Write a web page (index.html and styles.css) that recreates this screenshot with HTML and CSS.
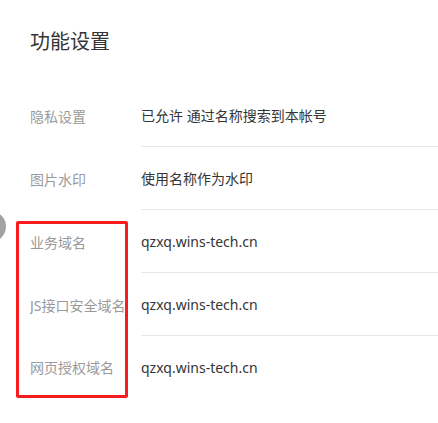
FILE: index.html
```html
<!DOCTYPE html>
<html lang="zh-CN">
<head>
<meta charset="utf-8">
<title>功能设置</title>
<link rel="stylesheet" href="styles.css">
</head>
<body>
<div class="page">
  <h2 class="title">功能设置</h2>
  <div class="list">
    <div class="row">
      <div class="label">隐私设置</div>
      <div class="value">已允许 通过名称搜索到本帐号</div>
    </div>
    <div class="row">
      <div class="label">图片水印</div>
      <div class="value">使用名称作为水印</div>
    </div>
    <div class="row">
      <div class="label">业务域名</div>
      <div class="value">qzxq.wins-tech.cn</div>
    </div>
    <div class="row">
      <div class="label">JS接口安全域名</div>
      <div class="value">qzxq.wins-tech.cn</div>
    </div>
    <div class="row">
      <div class="label">网页授权域名</div>
      <div class="value">qzxq.wins-tech.cn</div>
    </div>
  </div>
  <div class="highlight"></div>
  <div class="dot"></div>
</div>
</body>
</html>
```

FILE: styles.css
```css
html, body {
  margin: 0;
  padding: 0;
  background: #ffffff;
}
.page {
  position: relative;
  width: 438px;
  height: 423px;
  overflow: hidden;
  padding-left: 30px;
  box-sizing: border-box;
  font-family: "Noto Sans", "Noto Sans CJK SC", sans-serif;
  color: #353535;
}
.title {
  margin: 28px 0 28px 0;
  font-size: 20px;
  line-height: 28px;
  font-weight: normal;
  color: #353535;
}
.list {
  display: flex;
  flex-direction: column;
  margin-top: 1px;
}
.row {
  display: flex;
  align-items: stretch;
  font-size: 14px;
}
.label {
  width: 111px;
  flex: none;
  display: flex;
  align-items: center;
  color: #9a9a9a;
  white-space: nowrap;
  overflow: hidden;
}
.value {
  flex: 1;
  height: 62px;
  display: flex;
  align-items: center;
  border-bottom: 1px solid #e7e7e7;
  color: #353535;
}
.row:last-child .value {
  border-bottom: none;
}
.highlight {
  position: absolute;
  left: 16px;
  top: 221px;
  width: 112px;
  height: 177px;
  border: 3px solid #f91c1c;
  border-radius: 2px;
  box-sizing: border-box;
}
.dot {
  position: absolute;
  left: -25px;
  top: 211px;
  width: 31px;
  height: 31px;
  border-radius: 50%;
  background: #a3a3a3;
}
```
